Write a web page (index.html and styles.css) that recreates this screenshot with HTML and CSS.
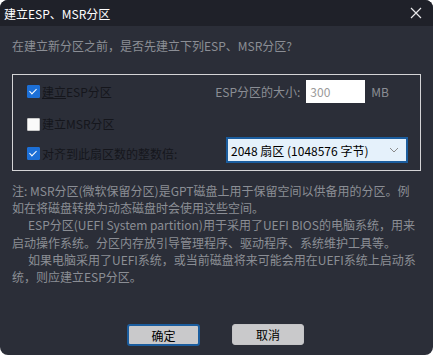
FILE: index.html
```html
<!DOCTYPE html>
<html>
<head lang="zh">
    <meta charset="UTF-8">
    <title>建立ESP、MSR分区</title>
    <link rel="stylesheet" href="styles.css">
</head>
<body>
<div class="window">
    <div class="titlebar">
        <span class="title">建立ESP、MSR分区</span>
        <span class="close">
            <svg width="12" height="12" viewBox="0 0 12 12"><path d="M1 1L11 11M11 1L1 11" stroke="#e8e8ea" stroke-width="1.2"/></svg>
        </span>
    </div>
    <div class="content">
        <div class="prompt">在建立新分区之前，是否先建立下列ESP、MSR分区?</div>
        <div class="group">
            <div class="row row_esp">
                <label class="check"><span class="box checked"></span><span class="text"><u>建立</u>ESP分区</span></label>
                <div class="size">
                    <span class="size_label">ESP分区的大小:</span>
                    <span class="input">300</span>
                    <span class="unit">MB</span>
                </div>
            </div>
            <div class="row row_msr">
                <label class="check"><span class="box"></span><span class="text">建立MSR分区</span></label>
            </div>
            <div class="row row_align">
                <label class="check check_low"><span class="box checked"></span><span class="text">对齐到此扇区数的整数倍:</span></label>
                <div class="select">
                    <span>2048 扇区 (1048576 字节)</span>
                    <svg width="10" height="6" viewBox="0 0 10 6"><path d="M1 1L5 5L9 1" stroke="#8a8a8a" fill="none" stroke-width="1"/></svg>
                </div>
            </div>
        </div>
        <div class="notes">
            注: MSR分区(微软保留分区)是GPT磁盘上用于保留空间以供备用的分区。例<br>
            如在将磁盘转换为动态磁盘时会使用这些空间。<br>
            <span class="indent"></span>ESP分区(UEFI System partition)用于采用了UEFI BIOS的电脑系统，用来<br>
            启动操作系统。分区内存放引导管理程序、驱动程序、系统维护工具等。<br>
            <span class="indent"></span>如果电脑采用了UEFI系统，或当前磁盘将来可能会用在UEFI系统上启动系<br>
            统，则应建立ESP分区。
        </div>
        <div class="buttons">
            <button class="btn btn_default">确定</button>
            <button class="btn">取消</button>
        </div>
    </div>
</div>
</body>
</html>
```

FILE: styles.css
```css
html, body {
    margin: 0;
    background: #ffffff;
}
body {
    font-family: "Noto Sans CJK SC", "Noto Sans", sans-serif;
    font-size: 12px;
}
.window {
    width: 433px;
    height: 355px;
    border-radius: 8px;
    overflow: hidden;
    background: #2b2e38;
    display: flex;
    flex-direction: column;
}
.titlebar {
    height: 26px;
    background: #1f2129;
    display: flex;
    align-items: center;
    padding-left: 4px;
    color: #ffffff;
    font-size: 12px;
}
.close {
    margin-left: auto;
    width: 32px;
    display: flex;
    justify-content: center;
    margin-right: 1px;
}
.content {
    padding: 0 12px;
}
.prompt {
    margin-top: 12px;
    line-height: 16px;
    color: #8b8e95;
}
.group {
    margin-top: 20px;
    height: 90px;
    border: 1px solid #d4d4d6;
    padding: 5px 12px 0 14px;
}
.row {
    display: flex;
    align-items: center;
}
.row_esp {
    height: 23px;
}
.row_msr {
    height: 20px;
    margin-top: 11px;
}
.row_align {
    height: 26px;
    margin-top: 3px;
}
.check {
    display: flex;
    align-items: center;
    gap: 2px;
    color: #15161c;
}
.check_low {
    margin-top: 7px;
}
.check .text {
    line-height: 16px;
}
.box {
    width: 11px;
    height: 11px;
    background: #fafafa;
    border: 1px solid #c8c8c8;
    border-radius: 1px;
    position: relative;
}
.box.checked {
    background: #1c6fd6;
    border-color: #1c6fd6;
}
.box.checked::after {
    content: "";
    position: absolute;
    left: 3px;
    top: 1px;
    width: 3px;
    height: 6px;
    border: solid #ffffff;
    border-width: 0 1.5px 1.5px 0;
    transform: rotate(45deg);
}
.size {
    margin-left: auto;
    margin-right: 19px;
    display: flex;
    align-items: center;
    color: #8b8e95;
}
.size_label {
    margin-right: 6px;
}
.input {
    width: 59px;
    height: 23px;
    line-height: 23px;
    background: #ffffff;
    color: #9a9a9a;
    padding-left: 4px;
    box-sizing: border-box;
}
.unit {
    margin-left: 6px;
}
.select {
    margin-left: auto;
    width: 182px;
    height: 26px;
    box-sizing: border-box;
    border: 2px solid #1b5d9e;
    background: #e5f1fb;
    color: #000000;
    display: flex;
    align-items: center;
    padding: 0 7px 0 3px;
    justify-content: space-between;
}
.notes {
    margin-top: 11px;
    line-height: 17.2px;
    color: #8b8e95;
    white-space: nowrap;
}
.indent {
    display: inline-block;
    width: 16px;
}
.buttons {
    margin-top: 39px;
    display: flex;
    justify-content: center;
    gap: 32px;
    padding-right: 2px;
}
.btn {
    width: 72px;
    height: 21px;
    border: 1px solid #c4c4c6;
    border-radius: 3px;
    background: #c9c9cb;
    color: #000000;
    font-family: "Noto Sans CJK SC", sans-serif;
    font-size: 12px;
    padding: 0;
}
.btn_default {
    border: 2px solid #1b5d9e;
    width: 73px;
    height: 22px;
}
```
